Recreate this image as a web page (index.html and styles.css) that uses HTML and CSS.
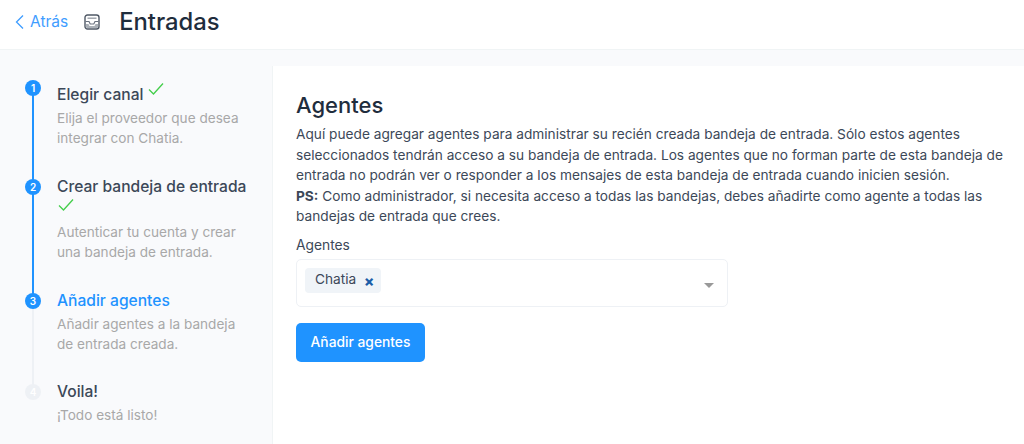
FILE: index.html
```html
<!DOCTYPE html>
<html lang="es">
<head>
    <meta charset="UTF-8">
    <meta name="viewport" content="width=device-width, initial-scale=1.0">
    <title>Entradas</title>
    <link rel="stylesheet" href="styles.css">
</head>
<body>
    <div class="header">
        <a class="back-link" href="#">
            <svg class="back-icon" width="9" height="16" viewBox="0 0 9 16"><path d="M8 1.500 1.500 8 8 14.500" fill="none" stroke="currentColor" stroke-width="1.300"/></svg>
            <span>Atrás</span>
        </a>
        <svg class="inbox-icon" width="16" height="16" viewBox="0 0 16 16">
            <rect x="1" y="1" width="14" height="14" rx="2.500" fill="none" stroke="#4f5865" stroke-width="1.400"/>
            <path d="M3.500 4.200h9" stroke="#9aa0a8" stroke-width="1.400"/>
            <path d="M1.500 7.500h3.500l1.200 2.500h3.600L11 7.500h3.500" fill="none" stroke="#6b7380" stroke-width="1.200"/>
            <path d="M2 10h2.500l1 2h5l1-2H14v3a1 1 0 0 1-1 1H3a1 1 0 0 1-1-1z" fill="#aab0b7"/>
        </svg>
        <h1>Entradas</h1>
    </div>

    <div class="main">
        <div class="steps">
            <div class="step done step-first">
                <div class="step-num">1</div>
                <div class="step-body">
                    <h3>Elegir canal <svg class="check" width="16" height="14" viewBox="0 0 16 14"><path d="M1 7.500 5.500 12 15 1.500" fill="none" stroke="#44ce4b" stroke-width="1.300"/></svg></h3>
                    <p>Elija el proveedor que desea integrar con Chatia.</p>
                </div>
            </div>
            <div class="step done step-second">
                <div class="step-num">2</div>
                <div class="step-body">
                    <h3>Crear bandeja de entrada <svg class="check" width="16" height="14" viewBox="0 0 16 14"><path d="M1 7.500 5.500 12 15 1.500" fill="none" stroke="#44ce4b" stroke-width="1.300"/></svg></h3>
                    <p>Autenticar tu cuenta y crear una bandeja de entrada.</p>
                </div>
            </div>
            <div class="step active step-third">
                <div class="step-num">3</div>
                <div class="step-body">
                    <h3>Añadir agentes</h3>
                    <p>Añadir agentes a la bandeja de entrada creada.</p>
                </div>
            </div>
            <div class="step pending">
                <div class="step-num">4</div>
                <div class="step-body">
                    <h3>Voila!</h3>
                    <p>¡Todo está listo!</p>
                </div>
            </div>
        </div>

        <div class="content">
            <h2>Agentes</h2>
            <p class="intro">Aquí puede agregar agentes para administrar su recién creada bandeja de entrada. Sólo estos agentes seleccionados tendrán acceso a su bandeja de entrada. Los agentes que no forman parte de esta bandeja de entrada no podrán ver o responder a los mensajes de esta bandeja de entrada cuando inicien sesión.<br><b>PS:</b> Como administrador, si necesita acceso a todas las bandejas, debes añadirte como agente a todas las bandejas de entrada que crees.</p>
            <label class="field-label">Agentes</label>
            <div class="multiselect">
                <span class="tag">Chatia <span class="tag-x">×</span></span>
                <span class="caret"></span>
            </div>
            <button class="submit">Añadir agentes</button>
        </div>
    </div>
</body>
</html>
```

FILE: styles.css
```css
* {
    box-sizing: border-box;
}

body {
    font-family: Inter, 'Noto Sans', sans-serif;
    margin: 0;
    height: 444px;
    overflow: hidden;
    background-color: #fff;
    color: #3c4858;
}

.header {
    height: 50px;
    background-color: #fff;
    border-bottom: 1px solid #f0f4f5;
    padding: 0 16px 6px 15px;
    display: flex;
    align-items: center;
}

.back-link {
    display: flex;
    align-items: center;
    gap: 6px;
    color: #3f9dff;
    font-size: 15.5px;
    text-decoration: none;
}

.inbox-icon {
    margin-left: 16px;
}

h1 {
    margin: 0 0 0 19px;
    font-size: 23.8px;
    font-weight: 500;
    color: #1f2d3d;
}

.main {
    display: flex;
    height: 394px;
    background-color: #f9fafc;
    padding: 16px 0 0 0;
}

.steps {
    width: 272px;
    padding: 14px 20px 0 25px;
    flex-shrink: 0;
}

.step {
    display: flex;
    gap: 16px;
    position: relative;
}

.step-first { height: 99px; }
.step-second { height: 114px; }
.step-third { height: 91px; }

.step::before {
    content: "";
    position: absolute;
    left: 7px;
    top: 8px;
    bottom: -8px;
    width: 2px;
    background-color: #1f93ff;
}

.step-third::before {
    background-color: #eef1f5;
}

.step.pending::before {
    display: none;
}

.step-num {
    width: 16px;
    height: 16px;
    border-radius: 50%;
    background-color: #1f93ff;
    color: #fff;
    font-size: 10px;
    font-weight: 600;
    line-height: 16px;
    text-align: center;
    flex-shrink: 0;
    position: relative;
}

.pending .step-num {
    background-color: #eef1f5;
}

.step-body {
    margin-top: -3px;
}

.step-first .step-body {
    margin-top: 4px;
}

.step h3 {
    margin: 0 0 2px 0;
    font-size: 15.6px;
    font-weight: 500;
    line-height: 22px;
    color: #3c4858;
}

.check {
    position: relative;
    top: -4px;
}

.step-second .check {
    display: block;
    margin: 0 0 10px 1px;
    top: 0;
}

.step.active h3 {
    color: #1f93ff;
}

.step p {
    margin: 0;
    font-size: 13.6px;
    line-height: 20px;
    color: #a8a8a8;
}

.content {
    flex: 1;
    background-color: #fff;
    border-left: 1px solid #f0f4f5;
    padding: 24px 10px 0 23px;
}

h2 {
    margin: 0 0 4px 0;
    font-size: 22px;
    font-weight: 500;
    line-height: 30px;
    color: #1f2d3d;
}

.intro {
    margin: 0 0 8px 0;
    font-size: 13.7px;
    line-height: 20.500px;
    color: #3c4858;
}

.field-label {
    display: block;
    font-size: 13.8px;
    line-height: 20px;
    margin-bottom: 4px;
}

.multiselect {
    width: 432px;
    height: 48px;
    border: 1px solid #eef1f5;
    border-radius: 5px;
    background-color: #fff;
    padding: 8px;
    position: relative;
}

.tag {
    display: inline-block;
    height: 25px;
    padding: 0 7px 0 10px;
    background-color: #f0f4f8;
    border-radius: 4px;
    font-size: 13.7px;
    line-height: 23px;
    color: #3c4858;
}

.tag-x {
    color: #1b5fa8;
    font-size: 15px;
    font-weight: 800;
    margin-left: 4px;
    vertical-align: -2px;
}

.caret {
    position: absolute;
    right: 13px;
    top: 23px;
    border-style: solid;
    border-width: 5px 5px 0;
    border-color: #999 transparent transparent;
}

.submit {
    display: block;
    margin-top: 16px;
    width: 129px;
    height: 39px;
    border: none;
    border-radius: 5px;
    background-color: #1f93ff;
    color: #fff;
    font-family: inherit;
    font-size: 13.8px;
    font-weight: 500;
    cursor: pointer;
}
```
